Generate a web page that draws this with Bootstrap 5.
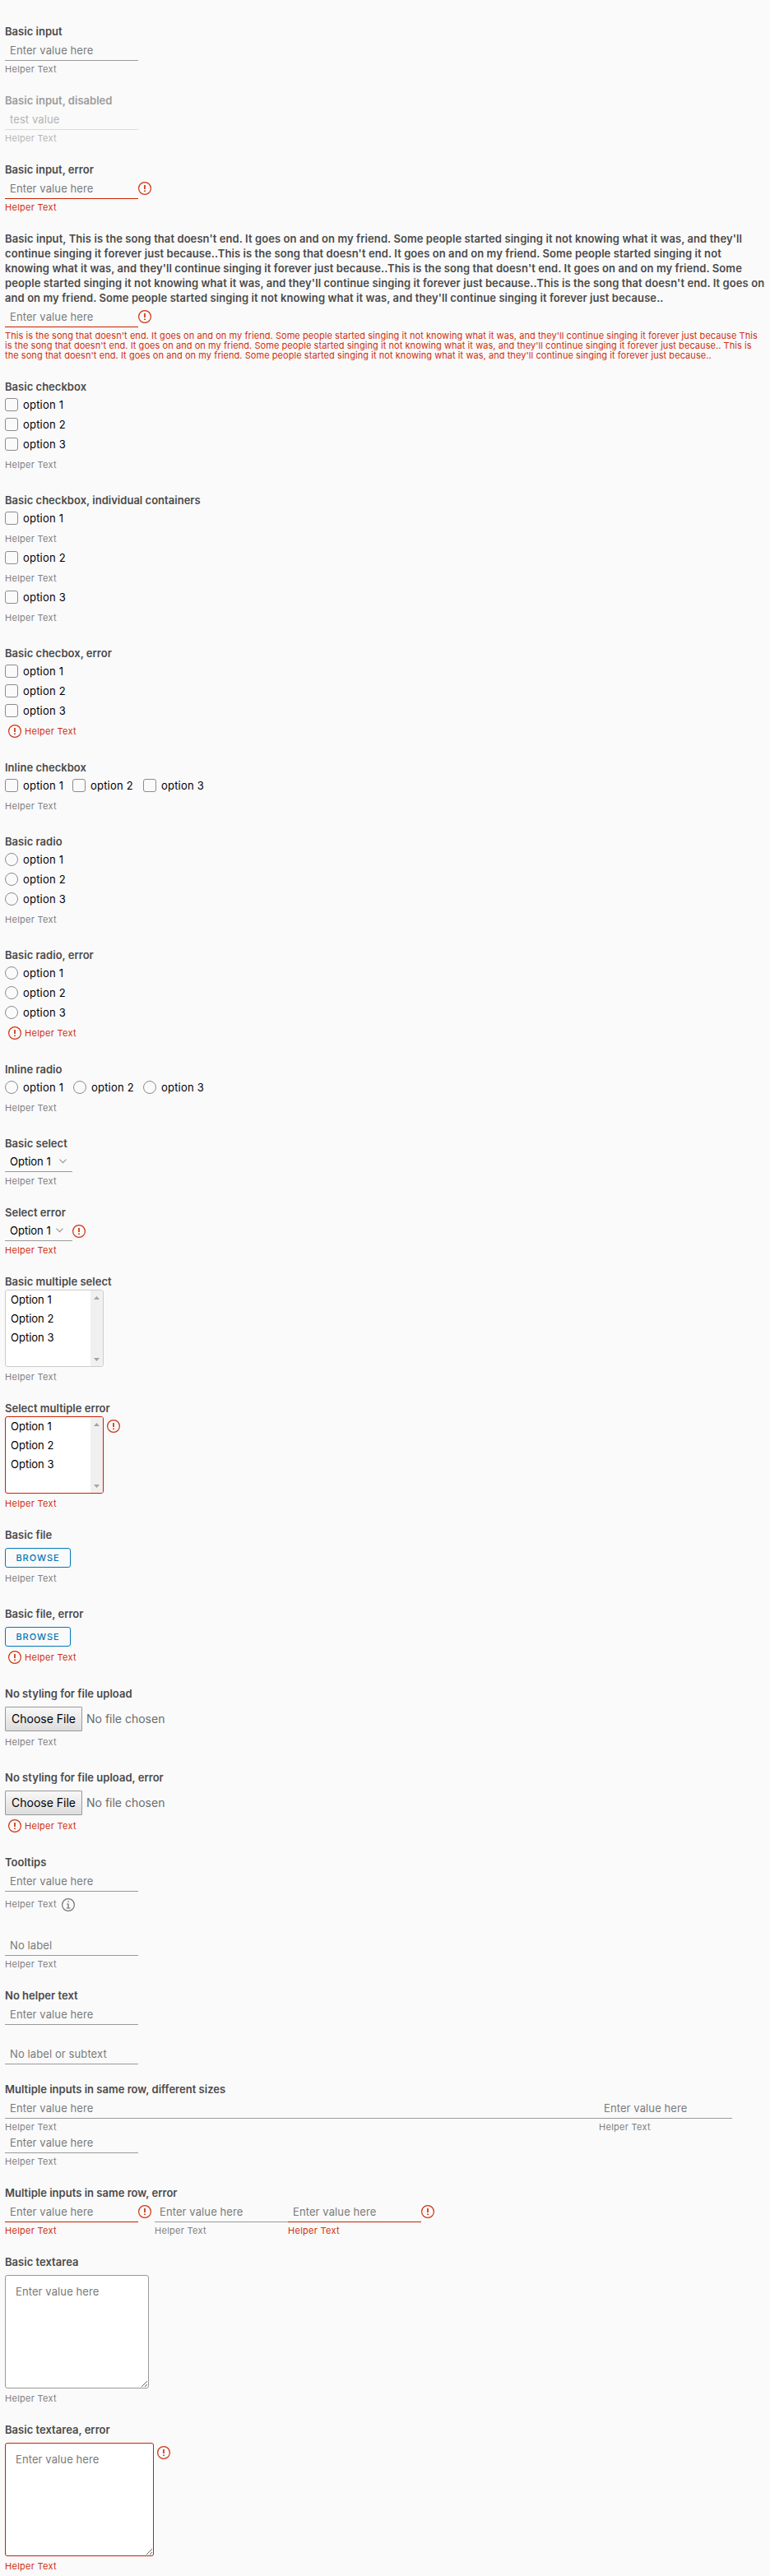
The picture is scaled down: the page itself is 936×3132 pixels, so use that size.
<!DOCTYPE html>
<html lang="en">
<head>
<meta charset="utf-8">
<title>Form controls</title>
<link rel="stylesheet" href="https://cdn.jsdelivr.net/npm/bootstrap@5.3.0/dist/css/bootstrap.min.css">
<style>
:root{--ink:#4a4a4a;--muted:#808080;--line:#9a9a9a;--err:#c92100}
body{background:#fafafa;font-family:Inter,"Open Sans",sans-serif;font-size:13px;line-height:24px;color:#000;padding:29px 0 0 6px;margin:0;overflow:hidden}
section{margin-bottom:24px}
.title{display:block;font-weight:600;line-height:18px;color:var(--ink);letter-spacing:.02px;white-space:nowrap;padding-bottom:1px}
.title.longtitle{letter-spacing:.08px}
section:has(.title){margin-bottom:23px}
.form-control.line{height:24px;width:162px;min-height:0;padding:0 6px 2px;border:0;border-bottom:1px solid var(--line);border-radius:0;background:transparent;font-size:13px;line-height:21px;letter-spacing:.1px;color:#000}
.form-control::placeholder{color:#7a7a7a;opacity:1}
.fieldbox{padding-top:2px}
.bad .form-control.line{border-color:var(--err)}
.hint{display:block;font-size:11px;line-height:12px;color:var(--muted);white-space:nowrap;margin-top:4px;letter-spacing:.28px}
.hint.prose{letter-spacing:.06px}
.bad .hint,.hint.bad{color:#d0300f}
.ico{width:16px;height:16px;flex:none;color:#d0300f}
.off .title{color:#9c9c9c}.off .hint{color:#b6b6b6}
.off .form-control.line{border-color:#ddd;color:#b4b4b4}
.opt{height:24px;display:flex;align-items:flex-start}
.opt .form-check-input{width:16px;height:16px;margin:4px 6px 0 0;float:none;border:1px solid #8c8c8c;background-color:#fafafa;flex:none}
.opt .form-check-input[type=checkbox]{border-radius:3px}
.opt label{line-height:24px;letter-spacing:.2px}
.tall{height:24px;padding-top:7px;margin:0}
.tall.bad{height:25px;display:flex}
.tall.bad .ico{margin:-2px 4px 0 4px}
.pick{width:82px;height:25px;padding-left:6px;border-bottom:1px solid var(--line);line-height:25px}
.listbox{width:120px;height:94px;border:1px solid #ccc;border-radius:3px;background:#fff;overflow:hidden}
.bad .listbox{border-color:var(--err)}
.listbox .items{line-height:23px;padding-left:6px}
.track{width:15px;background:#f0f0f0;padding:7px 0 6px}
.btn.browse{width:80px;height:24px;padding:0;border:1px solid #0079b8;border-radius:3px;color:#0079b8;font-size:11px;font-weight:500;letter-spacing:.95px;line-height:22px;display:block}
.btn.choose{width:94px;height:30px;padding:0;border:1px solid #999;border-radius:1px;background:linear-gradient(#f8f8f8,#ddd);font-size:14px;line-height:28px;color:#000}
.chosen{font-size:14px;color:#6a6a6a;margin-left:5px;line-height:30px;white-space:nowrap}
textarea.form-control{width:175px;height:138px;border:1px solid #9a9a9a;border-radius:3px;padding:7px 12px;font-size:13px;line-height:24px;letter-spacing:.1px;background:#fff}
.bad textarea.form-control{width:181px;border-color:var(--err)}
</style>
</head>
<body>
<svg width="0" height="0" class="position-absolute"><defs>
<symbol id="warn" viewBox="0 0 16 16"><circle cx="8" cy="8" r="7.4" fill="none" stroke="currentColor" stroke-width="1.2"/><path d="M8 4v5.1M8 10.5v1.6" stroke="currentColor" stroke-width="1.7"/></symbol>
<symbol id="info" viewBox="0 0 16 16"><circle cx="8" cy="8" r="7.4" fill="none" stroke="currentColor" stroke-width="1.2"/><path d="M7.4 3.2h1.4v1.5H7.4zM6 6.4h2.7v5h1.8v1.1H5.6v-1.1h1.8V7.5H6z" fill="currentColor"/></symbol>
<symbol id="down" viewBox="0 0 9 6"><path d="M.5.7l4 4 4-4" fill="none" stroke="#999" stroke-width="1.2"/></symbol>
<symbol id="up-tri" viewBox="0 0 7 4"><path d="M0 4L3.5 0 7 4z" fill="#a3a3a3"/></symbol>
<symbol id="down-tri" viewBox="0 0 7 4"><path d="M0 0h7L3.5 4z" fill="#a3a3a3"/></symbol>
</defs></svg>

<section><label class="title">Basic input</label><div class="fieldbox"><input class="form-control line" placeholder="Enter value here"></div><span class="hint">Helper Text</span></section>
<section class="off"><label class="title">Basic input, disabled</label><div class="fieldbox"><input class="form-control line" value="test value" disabled></div><span class="hint">Helper Text</span></section>
<section class="bad"><label class="title">Basic input, error</label><div class="fieldbox d-flex"><input class="form-control line" placeholder="Enter value here"><svg class="ico" style="margin-top:3px"><use href="#warn"/></svg></div><span class="hint">Helper Text</span></section>
<section class="bad"><label class="title longtitle">Basic input, This is the song that doesn't end. It goes on and on my friend. Some people started singing it not knowing what it was, and they'll<br>continue singing it forever just because..This is the song that doesn't end. It goes on and on my friend. Some people started singing it not<br>knowing what it was, and they'll continue singing it forever just because..This is the song that doesn't end. It goes on and on my friend. Some<br>people started singing it not knowing what it was, and they'll continue singing it forever just because..This is the song that doesn't end. It goes on<br>and on my friend. Some people started singing it not knowing what it was, and they'll continue singing it forever just because..</label><div class="fieldbox d-flex"><input class="form-control line" placeholder="Enter value here"><svg class="ico" style="margin-top:3px"><use href="#warn"/></svg></div><span class="hint prose">This is the song that doesn't end. It goes on and on my friend. Some people started singing it not knowing what it was, and they'll continue singing it forever just because This<br>is the song that doesn't end. It goes on and on my friend. Some people started singing it not knowing what it was, and they'll continue singing it forever just because.. This is<br>the song that doesn't end. It goes on and on my friend. Some people started singing it not knowing what it was, and they'll continue singing it forever just because..</span></section>

<section><label class="title">Basic checkbox</label>
<div class="opt"><input type="checkbox" class="form-check-input"><label>option 1</label></div><div class="opt"><input type="checkbox" class="form-check-input"><label>option 2</label></div><div class="opt"><input type="checkbox" class="form-check-input"><label>option 3</label></div><div class="hint tall">Helper Text</div></section>
<section><label class="title">Basic checkbox, individual containers</label>
<div class="opt"><input type="checkbox" class="form-check-input"><label>option 1</label></div><div class="hint tall">Helper Text</div><div class="opt"><input type="checkbox" class="form-check-input"><label>option 2</label></div><div class="hint tall">Helper Text</div><div class="opt"><input type="checkbox" class="form-check-input"><label>option 3</label></div><div class="hint tall">Helper Text</div></section>
<section><label class="title">Basic checbox, error</label>
<div class="opt"><input type="checkbox" class="form-check-input"><label>option 1</label></div><div class="opt"><input type="checkbox" class="form-check-input"><label>option 2</label></div><div class="opt"><input type="checkbox" class="form-check-input"><label>option 3</label></div><div class="hint tall bad"><svg class="ico"><use href="#warn"/></svg>Helper Text</div></section>
<section><label class="title">Inline checkbox</label>
<div class="d-flex"><div class="opt" style="width:82px"><input type="checkbox" class="form-check-input"><label>option 1</label></div><div class="opt" style="width:86px"><input type="checkbox" class="form-check-input"><label>option 2</label></div><div class="opt"><input type="checkbox" class="form-check-input"><label>option 3</label></div></div><div class="hint tall">Helper Text</div></section>

<section><label class="title">Basic radio</label>
<div class="opt"><input type="radio" class="form-check-input"><label>option 1</label></div><div class="opt"><input type="radio" class="form-check-input"><label>option 2</label></div><div class="opt"><input type="radio" class="form-check-input"><label>option 3</label></div><div class="hint tall">Helper Text</div></section>
<section><label class="title">Basic radio, error</label>
<div class="opt"><input type="radio" class="form-check-input"><label>option 1</label></div><div class="opt"><input type="radio" class="form-check-input"><label>option 2</label></div><div class="opt"><input type="radio" class="form-check-input"><label>option 3</label></div><div class="hint tall bad"><svg class="ico"><use href="#warn"/></svg>Helper Text</div></section>
<section><label class="title">Inline radio</label>
<div class="d-flex"><div class="opt" style="width:83px"><input type="radio" class="form-check-input"><label>option 1</label></div><div class="opt" style="width:85px"><input type="radio" class="form-check-input"><label>option 2</label></div><div class="opt"><input type="radio" class="form-check-input"><label>option 3</label></div></div><div class="hint tall">Helper Text</div></section>

<section><label class="title">Basic select</label><div class="pick d-flex"><span style="width:60px">Option 1</span><svg width="9" height="6" style="margin-top:9px"><use href="#down"/></svg></div><span class="hint" style="margin-top:5px">Helper Text</span></section>
<section class="bad"><label class="title">Select error</label><div class="d-flex"><div class="pick d-flex"><span style="width:56px">Option 1</span><svg width="9" height="6" style="margin-top:9px"><use href="#down"/></svg></div><svg class="ico" style="margin-top:5px"><use href="#warn"/></svg></div><span class="hint" style="margin-top:5px">Helper Text</span></section>
<section><label class="title">Basic multiple select</label><div class="listbox d-flex justify-content-between"><div class="items">Option 1<br>Option 2<br>Option 3</div><div class="track d-flex flex-column justify-content-between align-items-center"><svg width="7" height="4"><use href="#up-tri"/></svg><svg width="7" height="4"><use href="#down-tri"/></svg></div></div><span class="hint" style="margin-top:6px">Helper Text</span></section>
<section class="bad"><label class="title">Select multiple error</label><div class="d-flex"><div class="listbox d-flex justify-content-between"><div class="items">Option 1<br>Option 2<br>Option 3</div><div class="track d-flex flex-column justify-content-between align-items-center"><svg width="7" height="4"><use href="#up-tri"/></svg><svg width="7" height="4"><use href="#down-tri"/></svg></div></div><svg class="ico ms-1 mt-1"><use href="#warn"/></svg></div><span class="hint" style="margin-top:6px">Helper Text</span></section>

<section><label class="title">Basic file</label><button class="btn browse" style="margin-top:6px">BROWSE</button><div class="hint tall">Helper Text</div></section>
<section><label class="title">Basic file, error</label><button class="btn browse" style="margin-top:6px">BROWSE</button><div class="hint tall bad"><svg class="ico"><use href="#warn"/></svg>Helper Text</div></section>
<section><label class="title">No styling for file upload</label><div class="d-flex" style="margin-top:6px"><button class="btn choose">Choose File</button><span class="chosen">No file chosen</span></div><div class="hint tall">Helper Text</div></section>
<section><label class="title">No styling for file upload, error</label><div class="d-flex" style="margin-top:6px"><button class="btn choose">Choose File</button><span class="chosen">No file chosen</span></div><div class="hint tall bad"><svg class="ico"><use href="#warn"/></svg>Helper Text</div></section>

<section style="margin-bottom:30px"><label class="title">Tooltips</label><div class="fieldbox"><input class="form-control line" placeholder="Enter value here"></div><div class="d-flex" style="height:24px"><span class="hint" style="width:69px;margin-top:9px">Helper Text</span><svg class="ico" style="margin-top:8px;color:#737373"><use href="#info"/></svg></div></section>
<section style="margin-bottom:23px"><input class="form-control line" placeholder="No label"><span class="hint">Helper Text</span></section>
<section style="margin-bottom:24px"><label class="title">No helper text</label><div class="fieldbox"><input class="form-control line" placeholder="Enter value here"></div></section>
<section style="margin-bottom:21px"><input class="form-control line" placeholder="No label or subtext"></section>
<section><label class="title">Multiple inputs in same row, different sizes</label><div class="d-flex fieldbox"><div><input class="form-control line" style="width:722px" placeholder="Enter value here"><span class="hint">Helper Text</span></div><div><input class="form-control line" placeholder="Enter value here"><span class="hint">Helper Text</span></div></div><div class="fieldbox"><input class="form-control line" placeholder="Enter value here"><span class="hint">Helper Text</span></div></section>
<section><label class="title">Multiple inputs in same row, error</label><div class="d-flex fieldbox"><div class="bad" style="width:182px"><div class="d-flex"><input class="form-control line" placeholder="Enter value here"><svg class="ico" style="margin-top:3px"><use href="#warn"/></svg></div><span class="hint">Helper Text</span></div><div><input class="form-control line" placeholder="Enter value here"><span class="hint">Helper Text</span></div><div class="bad"><div class="d-flex"><input class="form-control line" placeholder="Enter value here"><svg class="ico" style="margin-top:3px"><use href="#warn"/></svg></div><span class="hint">Helper Text</span></div></div></section>
<section><label class="title">Basic textarea</label><textarea class="form-control" style="margin-top:6px" placeholder="Enter value here"></textarea><span class="hint" style="margin-top:6px">Helper Text</span></section>
<section class="bad"><label class="title">Basic textarea, error</label><div class="d-flex" style="margin-top:6px"><textarea class="form-control" placeholder="Enter value here"></textarea><svg class="ico ms-1 mt-1"><use href="#warn"/></svg></div><span class="hint" style="margin-top:6px">Helper Text</span></section>
<script src="https://cdn.jsdelivr.net/npm/bootstrap@5.3.0/dist/js/bootstrap.bundle.min.js"></script>
</body>
</html>
